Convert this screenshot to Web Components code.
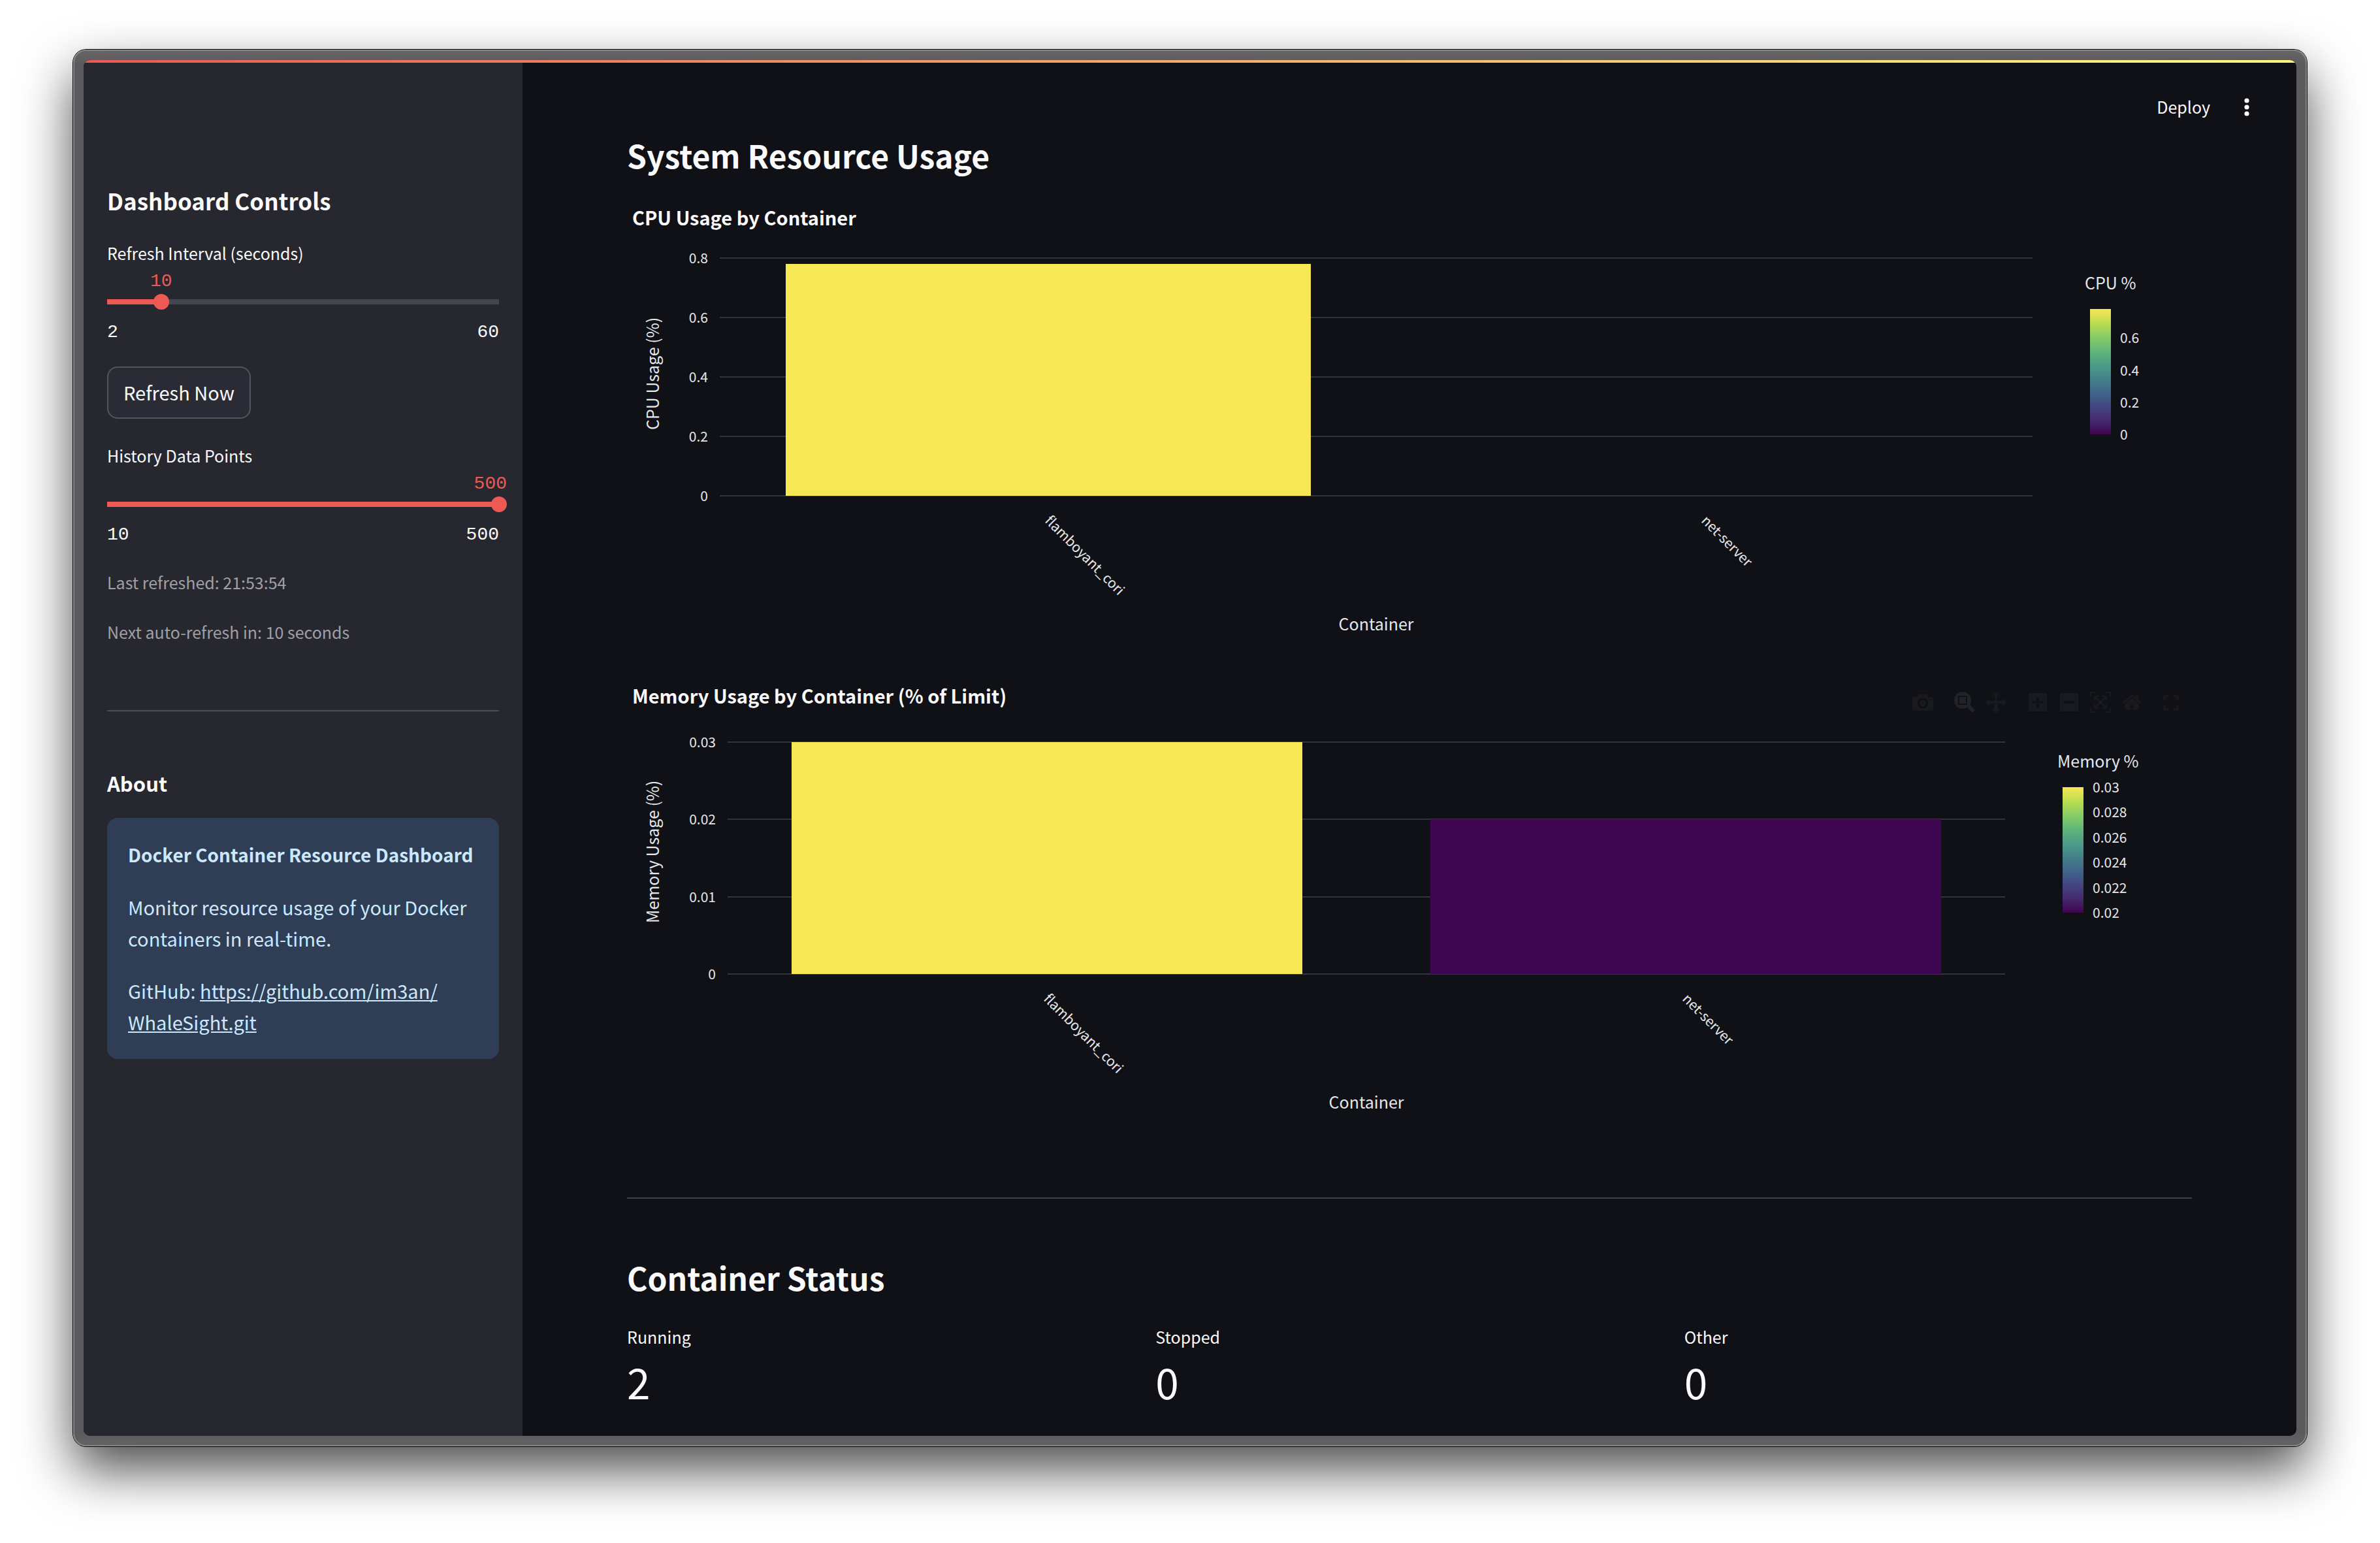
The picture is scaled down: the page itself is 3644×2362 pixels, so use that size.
<!DOCTYPE html>
<html lang="en">
<head>
<meta charset="utf-8">
<title>Docker Container Resource Dashboard</title>
<style>
  :root {
    --bg: #101116;
    --side: #272730;
    --text: #fafafa;
    --muted: #a0a0a3;
    --axis: #e5e7ea;
    --grid: #31333d;
    --accent: #ec5a53;
    --fs-tick: 21px;
    --fs-label: 25px;
    --fs-strong: 28px;
    --fs-body: 29px;
    --fs-h3: 31px;
    --fs-h2: 35px;
    --fs-h1: 48px;
    --fs-metric: 64px;
    --fs-mono: 28px;
    --mono: "Liberation Mono", monospace;
  }
  * { box-sizing: border-box; }
  body {
    margin: 0;
    min-height: 100vh;
    padding: 76px 112px 148px;
    display: flex;
    background: #fff;
    color: var(--text);
    font-family: "Noto Sans CJK SC", "Noto Sans", sans-serif;
    font-size: var(--fs-body);
    line-height: 48px;
  }
  about-panel p { margin: 0; }
  about-panel strong { font-size: var(--fs-strong); }
  about-panel a { color: inherit; text-decoration: underline; }
</style>
</head>
<body>
<app-window>
  <side-bar slot="side">
    <h2>Dashboard Controls</h2>
    <range-slider label="Refresh Interval (seconds)" min="2" max="60" value="10"></range-slider>
    <ghost-button>Refresh Now</ghost-button>
    <range-slider label="History Data Points" min="10" max="500" value="500"></range-slider>
    <side-caption>Last refreshed: 21:53:54</side-caption>
    <side-caption>Next auto-refresh in: 10 seconds</side-caption>
    <about-panel heading="About">
      <p><strong>Docker Container Resource Dashboard</strong></p>
      <p>Monitor resource usage of your Docker containers in real-time.</p>
      <p>GitHub: <a href="https://github.com/im3an/WhaleSight.git">https://github.com/im3an/<wbr>WhaleSight.git</a></p>
    </about-panel>
  </side-bar>
  <top-toolbar></top-toolbar>
  <dash-section heading="System Resource Usage">
    <bar-chart heading="CPU Usage by Container" y-title="CPU Usage (%)" x-title="Container" names="flamboyant_cori net-server"
      ticks="0 0.2 0.4 0.6 0.8" values="0.78 0" legend="CPU %" legend-ticks="0 0.2 0.4 0.6" legend-range="0 0.78"
      style="--left:142px;--right:244px"></bar-chart>
    <bar-chart heading="Memory Usage by Container (% of Limit)" y-title="Memory Usage (%)" x-title="Container" names="flamboyant_cori net-server"
      ticks="0 0.01 0.02 0.03" values="0.03 0.02" legend="Memory %" legend-ticks="0.02 0.022 0.024 0.026 0.028 0.03" legend-range="0.02 0.03"
      style="--left:154px;--right:286px"><mode-bar></mode-bar></bar-chart>
  </dash-section>
  <section-rule></section-rule>
  <dash-section heading="Container Status">
    <metric-row>
      <metric-card label="Running">2</metric-card>
      <metric-card label="Stopped">0</metric-card>
      <metric-card label="Other">0</metric-card>
    </metric-row>
  </dash-section>
</app-window>

<script>
const define = (name, css, html, setup) => {
  customElements.define(name, class extends HTMLElement {
    connectedCallback() {
      if (this.shadowRoot) return;
      const root = this.attachShadow({ mode: "open" });
      const markup = typeof html === "function" ? html(this) : html;
      root.innerHTML = `<style>*{box-sizing:border-box}${css}</style>${markup}`;
      if (setup) setup(this, root);
    }
  });
};

define("app-window", `
  :host { flex: 1; display: flex; padding: 16px; border-radius: 20px;
    background: linear-gradient(#666466, #5d5a5d 24px, #5d5a5d calc(100% - 24px), #656265);
    box-shadow: inset 0 0 0 2px #858486, 0 0 0 1px #0a0a0a, 0 36px 80px rgba(0,0,0,.7); }
  .screen { flex: 1; display: flex; flex-direction: column; overflow: hidden; border-radius: 10px; background: var(--bg); }
  .strip { height: 4px; background: linear-gradient(90deg, #ec5a53, #fffd80); }
  .cols { flex: 1; display: flex; }
  main { flex: 1; min-width: 0; display: flex; flex-direction: column; }
`, `<div class="screen"><div class="strip"></div><div class="cols"><slot name="side"></slot><main><slot></slot></main></div></div>`);

define("side-bar", `
  :host { width: 672px; flex: none; padding: 187px 36px 36px; background: var(--side); display: flex; flex-direction: column; gap: 36px; }
  ::slotted(h2) { margin: 0; font-size: var(--fs-h2); line-height: 48px; font-weight: 600; }
`, `<slot></slot>`);

define("range-slider", `
  :host { display: block; font-size: var(--fs-label); line-height: 40px; }
  label { display: block; }
  .value { display: flex; height: 40px; line-height: 48px; margin-right: -12px; font-family: var(--mono); font-size: var(--fs-mono); color: var(--accent); }
  .value i { flex: 0 1 calc((100% - 12px) * var(--f) - 1ch); }
  .track { height: 30px; display: flex; align-items: center; border-radius: 4px;
    background: linear-gradient(90deg, var(--accent) calc(100% * var(--f)), #454651 0) center / 100% 8px no-repeat; }
  input { flex: none; appearance: none; width: calc(100% + 24px); height: 24px; margin: 0 -12px; background: none; }
  input::-webkit-slider-runnable-track { height: 24px; background: none; }
  input::-webkit-slider-thumb { appearance: none; width: 24px; height: 24px; border-radius: 50%; background: var(--accent); }
  .ends { display: flex; justify-content: space-between; height: 40px; line-height: 48px; margin-top: 8px; font-family: var(--mono); font-size: var(--fs-mono); }
`, el => {
  const [min, max, v] = ["min", "max", "value"].map(a => +el.getAttribute(a));
  return `<div style="--f:${(v - min) / (max - min)}"><label for="r">${el.getAttribute("label")}</label>
    <div class="value"><i></i><output for="r">${v}</output></div>
    <div class="track"><input id="r" type="range" min="${min}" max="${max}" value="${v}"></div>
    <div class="ends"><span>${min}</span><span>${max}</span></div></div>`;
}, (el, root) => {
  const input = root.querySelector("input");
  input.addEventListener("input", () => {
    root.querySelector("output").textContent = input.value;
    input.closest("div[style]").style.setProperty("--f", (input.value - input.min) / (input.max - input.min));
  });
});

define("ghost-button", `
  :host { display: flex; }
  button { height: 80px; padding: 0 23px 2px; font: inherit; color: inherit; background: #2b2b36; border: 2px solid #53545d; border-radius: 16px; }
`, `<button type="button"><slot></slot></button>`);

define("side-caption", `:host { display: block; font-size: var(--fs-label); line-height: 40px; color: var(--muted); }`, `<slot></slot>`);

define("about-panel", `
  :host { display: block; padding-top: 64px; }
  hr { margin: 0 0 86px; border: 0; height: 2px; background: #4d4e55; }
  h3 { margin: 0 0 29px; font-size: var(--fs-h3); line-height: 48px; font-weight: 600; }
  .box { padding: 31px 32px 33px; border-radius: 16px; background: #2f3d55; color: #cbe8fd; display: flex; flex-direction: column; gap: 32px; }
`, el => `<hr><h3>${el.getAttribute("heading")}</h3><div class="box"><slot></slot></div>`);

define("top-toolbar", `
  :host { height: 111px; padding: 47px 60px 0; display: flex; justify-content: flex-end; gap: 40px; font-size: var(--fs-label); line-height: 40px; }
  button { padding: 0; border: 0; background: none; color: inherit; font: inherit; line-height: 40px; height: 40px; display: flex; align-items: center; }
`, `<button type="button">Deploy</button>
  <button type="button" aria-label="Main menu"><svg width="32" height="32" viewBox="0 0 32 32" fill="#fafafa"><circle cx="16" cy="7" r="3.6"/><circle cx="16" cy="17" r="3.6"/><circle cx="16" cy="27" r="3.6"/></svg></button>`);

define("dash-section", `
  :host { display: block; padding: 0 160px; }
  h1 { margin: 0 0 41px; font-size: var(--fs-h1); line-height: 60px; font-weight: 600; }
  .body { display: flex; flex-direction: column; gap: 32px; }
`, el => `<h1>${el.getAttribute("heading")}</h1><div class="body"><slot></slot></div>`);

define("section-rule", `:host { display: block; height: 2px; margin: 93px 160px 90px; background: #404147; }`, ``);

/* Ticks are spread over the axis by growing spacers between zero-height marks. */
const marks = (ticks, lo, hi, cell) => {
  const t = [...ticks].reverse();
  let out = "", prev = hi;
  for (const s of t) { out += `<i style="flex-grow:${(prev - s) * 1000}"></i>${cell(s)}`; prev = +s; }
  return out + `<i style="flex-grow:${(prev - lo) * 1000}"></i>`;
};

define("bar-chart", `
  :host { position: relative; display: block; height: 700px; color: var(--axis); font-size: var(--fs-label); line-height: 40px; }
  h3 { margin: 0 0 29px 8px; font-size: var(--fs-body); line-height: 48px; font-weight: 700; color: var(--text); }
  .row { display: flex; height: 374px; }
  .left { width: var(--left); flex: none; display: flex; align-items: stretch; justify-content: space-between; padding: 0 18px; }
  .ytitle { writing-mode: vertical-rl; transform: rotate(180deg); text-align: center; white-space: nowrap; }
  .axis { display: flex; flex-direction: column; margin: -1px 0 1px; font-size: var(--fs-tick); text-align: right; }
  .axis b { font-weight: 400; height: 0; line-height: 0; }
  .axis i, .lines i { flex: 0 1 0px; }
  .plot { flex: 1; min-width: 0; display: grid; }
  .lines, .bars { grid-area: 1 / 1; display: flex; min-height: 0; }
  .lines { flex-direction: column; }
  .lines u { height: 2px; margin: -1px 0; background: var(--grid); }
  .bars { align-items: flex-end; }
  .bars div { flex: 1; height: 100%; display: flex; align-items: flex-end; justify-content: center; }
  .bars span { width: 80%; }
  .right { width: var(--right); flex: none; padding: 27px 0 0 80px; }
  .cats { display: flex; height: 175px; padding-top: 17px; margin: 0 var(--right) 0 var(--left); font-size: var(--fs-tick); line-height: 32px; }
  .cats div { flex: 1; min-width: 0; }
  .cats span { display: block; width: max-content; margin-left: 50%; transform: rotate(45deg); transform-origin: 0 50%; }
  .xtitle { margin: 0 var(--right) 0 var(--left); text-align: center; }
  .scale { display: flex; height: 192px; padding-left: 8px; gap: 14px; margin-top: 21px; }
  .ramp { width: 32px; background: linear-gradient(0deg, #3d064e, #45296f, #434682, #41658a, #448189, #4c9d87, #62b67b, #87cd66, #bcdd4f, #f8e755); }
  .scale .axis { text-align: left; }
`, el => {
  const a = n => el.getAttribute(n);
  const values = a("values").split(" ").map(Number);
  const top = Math.max(...values) / 0.95;
  const ticks = a("ticks").split(" ");
  const [lo, hi] = a("legend-range").split(" ").map(Number);
  const names = a("names").split(" ");
  const fill = v => v === Math.max(...values) ? "#f8e755" : "#3d064e";
  return `<h3>${a("heading")}</h3>
  <div class="row">
    <div class="left"><div class="ytitle">${a("y-title")}</div>
      <div class="axis">${marks(ticks, 0, top, s => `<b>${s}</b>`)}</div></div>
    <div class="plot">
      <div class="lines">${marks(ticks, 0, top, () => `<u></u>`)}</div>
      <div class="bars">${values.map(v => `<div><span style="height:${v / top * 100}%;background:${fill(v)}"></span></div>`).join("")}</div>
    </div>
    <div class="right">${a("legend")}
      <div class="scale"><div class="ramp"></div><div class="axis">${marks(a("legend-ticks").split(" "), lo, hi, s => `<b>${s}</b>`)}</div></div></div>
  </div>
  <div class="cats">${names.map(n => `<div><span>${n}</span></div>`).join("")}</div>
  <div class="xtitle">${a("x-title")}</div><slot></slot>`;
});

const flip = (w, d) => `<svg height="32" width="${Math.round(w * 32 / 1000)}" viewBox="0 0 ${w} 1000"><path transform="matrix(1 0 0 -1 0 850)" d="${d}"/></svg>`;
define("mode-bar", `
  :host { position: absolute; top: 19px; right: 16px; display: flex; gap: 16px; }
  button { width: 32px; height: 32px; padding: 0; border: 0; background: none; display: flex; align-items: center; justify-content: center; }
  svg { fill: #191a1f; } .on svg { fill: #222328; }
  .gap { margin-left: 16px; } .last { margin-left: 12px; }
`, `
  <button type="button" aria-label="Download plot">${flip(1000, "m500 450c-83 0-150-67-150-150 0-83 67-150 150-150 83 0 150 67 150 150 0 83-67 150-150 150z m400 150h-120c-16 0-34 13-39 29l-31 93c-6 15-23 28-40 28h-340c-16 0-34-13-39-28l-31-94c-6-15-23-28-40-28h-120c-55 0-100-45-100-100v-450c0-55 45-100 100-100h800c55 0 100 45 100 100v450c0 55-45 100-100 100z m-400-550c-138 0-250 112-250 250 0 138 112 250 250 250 138 0 250-112 250-250 0-138-112-250-250-250z m365 380c-19 0-35 16-35 35 0 19 16 35 35 35 19 0 35-16 35-35 0-19-16-35-35-35z")}</button>
  <button type="button" class="gap on" aria-label="Zoom">${flip(1000, "m1000-25l-250 251c40 63 63 138 63 218 0 224-182 406-407 406-224 0-406-182-406-406s183-406 407-406c80 0 155 22 218 62l250-250 125 125z m-812 250l0 438 437 0 0-438-437 0z m62 375l313 0 0-312-313 0 0 312z")}</button>
  <button type="button" aria-label="Pan">${flip(1000, "m1000 350l-187 188 0-125-250 0 0 250 125 0-188 187-187-187 125 0 0-250-250 0 0 125-188-188 186-187 0 125 252 0 0-250-125 0 187-188 188 188-125 0 0 250 250 0 0-126 187 188z")}</button>
  <button type="button" class="gap" aria-label="Zoom in">${flip(875, "m1 787l0-875 875 0 0 875-875 0z m687-500l-187 0 0-187-125 0 0 187-188 0 0 125 188 0 0 187 125 0 0-187 187 0 0-125z")}</button>
  <button type="button" aria-label="Zoom out">${flip(875, "m0 788l0-876 875 0 0 876-875 0z m688-500l-500 0 0 125 500 0 0-125z")}</button>
  <button type="button" aria-label="Autoscale">${flip(1000, "m250 850l-187 0-63 0 0-62 0-188 63 0 0 188 187 0 0 62z m688 0l-188 0 0-62 188 0 0-188 62 0 0 188 0 62-62 0z m-875-938l0 188-63 0 0-188 0-62 63 0 187 0 0 62-187 0z m875 188l0-188-188 0 0-62 188 0 62 0 0 62 0 188-62 0z m-125 188l-1 0-93-94-156 156 156 156 92-93 2 0 0 250-250 0 0-2 93-92-156-156-156 156 94 92 0 2-250 0 0-250 0 0 93 93 157-156-157-156-93 94 0 0 0-250 250 0 0 0-94 93 156 157 156-157-93-93 0 0 250 0 0 250z")}</button>
  <button type="button" aria-label="Reset axes">${flip(928, "m786 296v-267q0-15-11-26t-25-10h-214v214h-143v-214h-214q-15 0-25 10t-11 26v267q0 1 0 2t0 2l321 264 321-264q1-1 1-4z m124 39l-34-41q-5-5-12-6h-2q-7 0-12 3l-386 322-386-322q-7-4-13-4-7 2-12 7l-35 41q-4 5-3 13t6 12l401 334q18 15 42 15t43-15l136-114v109q0 8 5 13t13 5h107q8 0 13-5t5-13v-227l122-102q5-5 6-12t-4-13z")}</button>
  <button type="button" class="last" aria-label="Fullscreen"><svg width="32" height="32" viewBox="0 0 32 32" style="fill:none;stroke:#191a1f;stroke-width:3.6;stroke-linecap:round;stroke-linejoin:round"><path d="M6 11V7h5M21 7h5v4M26 22v5h-5M11 27H6v-5"/></svg></button>`);

define("metric-row", `:host { display: grid; grid-template-columns: repeat(3, 1fr); gap: 32px; }`, `<slot></slot>`);
define("metric-card", `
  :host { display: block; font-size: var(--fs-metric); line-height: 80px; }
  .label { font-size: var(--fs-label); line-height: 40px; margin-bottom: 8px; }
`, el => `<div class="label">${el.getAttribute("label")}</div><div><slot></slot></div>`);
</script>
</body>
</html>
